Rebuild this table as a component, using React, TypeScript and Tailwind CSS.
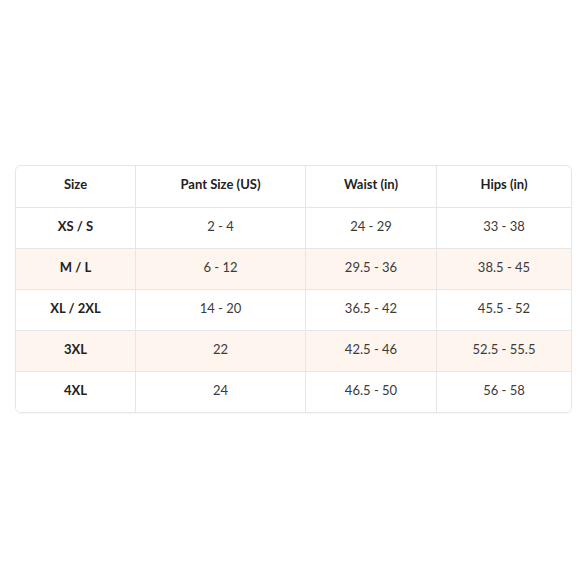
import React from 'react';

const rows = [
  { size: 'XS / S', pant: '2 - 4', waist: '24 - 29', hips: '33 - 38' },
  { size: 'M / L', pant: '6 - 12', waist: '29.5 - 36', hips: '38.5 - 45' },
  { size: 'XL / 2XL', pant: '14 - 20', waist: '36.5 - 42', hips: '45.5 - 52' },
  { size: '3XL', pant: '22', waist: '42.5 - 46', hips: '52.5 - 55.5' },
  { size: '4XL', pant: '24', waist: '46.5 - 50', hips: '56 - 58' },
];

const cols = 'grid grid-cols-[119px_170px_131px_1fr]';

export default function App() {
  return (
    <div className="w-[580px] h-[580px] bg-white flex items-start justify-start pl-[15px] pt-[165px] font-['Lato',sans-serif] text-[13px] text-[#222]">
      <div className="w-[557px] border border-[#e6e6e6] rounded-md overflow-hidden shadow-[0_1px_2px_rgba(0,0,0,0.04)]">
        <div className={`${cols} h-[41px] font-bold`}>
          <div className="flex items-center justify-center pb-[3px]">Size</div>
          <div className="flex items-center justify-center pb-[3px] border-l border-[#e6e6e6]">Pant Size (US)</div>
          <div className="flex items-center justify-center pb-[3px] border-l border-[#e6e6e6]">Waist (in)</div>
          <div className="flex items-center justify-center pb-[3px] border-l border-[#e6e6e6]">Hips (in)</div>
        </div>
        {rows.map((r, i) => (
          <div
            key={r.size}
            className={`${cols} h-[41px] border-t border-[#e6e6e6] ${i % 2 === 1 ? 'bg-[#fdf5ee]' : 'bg-white'}`}
          >
            <div className="flex items-center justify-center pb-[3px] font-bold">{r.size}</div>
            <div className="flex items-center justify-center pb-[3px] border-l border-[#e6e6e6] text-[#3a3a3a]">{r.pant}</div>
            <div className="flex items-center justify-center pb-[3px] border-l border-[#e6e6e6] text-[#3a3a3a]">{r.waist}</div>
            <div className="flex items-center justify-center pb-[3px] border-l border-[#e6e6e6] text-[#3a3a3a]">{r.hips}</div>
          </div>
        ))}
      </div>
    </div>
  );
}
